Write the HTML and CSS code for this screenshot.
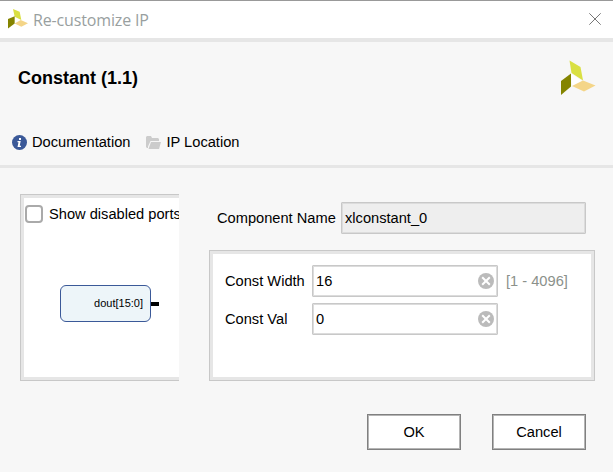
FILE: index.html
```html
<!DOCTYPE html>
<html lang="en">
<head>
<meta charset="utf-8">
<title>Re-customize IP</title>
<link rel="stylesheet" href="styles.css">
</head>
<body>
<div class="dialog">
  <header class="titlebar">
    <svg class="title-logo" viewBox="0 0 36 36" aria-hidden="true"><path fill="#d9e043" d="M9 0 21 5 24 20 12 14z"/><path fill="#848400" d="M0 18 12 13v13L0 35z"/><path fill="#f4d588" d="M12 26 23 20 36 25.500 24 32z"/></svg>
    <span class="title-text">Re-customize IP</span>
    <svg class="close" viewBox="0 0 12 12" aria-hidden="true"><path d="M.3.3 11.700 11.700M11.700.3.3 11.700" stroke="#777" stroke-width="1" fill="none"/></svg>
  </header>
  <section class="heading">
    <div class="heading-row">
      <h1>Constant (1.1)</h1>
      <svg class="logo" viewBox="0 0 36 36" aria-hidden="true"><path fill="#d9e043" d="M9.500.5 20.500 7 23 20.500 11.500 13z"/><path fill="#fff" d="M11 13.500 22 21 12 26z"/><path fill="#848400" d="M1 21 11 13.500v13L1 35z"/><path fill="#f4d588" d="M12 26 23 20.500 35.500 25.500 24 31.500z"/></svg>
    </div>
    <nav class="links">
      <a class="link doc"><svg width="15" height="15" viewBox="0 0 15 15" aria-hidden="true"><circle cx="7.500" cy="7.500" r="7.500" fill="#3b5998"/><path fill="#fff" d="M7 3h2v2H7zM5.500 6H8.700L7.700 10.700H9V12H5.500L6.500 7.200H5.500z"/></svg>Documentation</a>
      <a class="link"><svg width="15" height="13" viewBox="0 0 15 13" aria-hidden="true"><path fill="#ccc" d="M0 1 1 0H5L6 2H12L13 3V5H4.500L2 10.500V12H1L0 11z"/><path fill="#ccc" d="M5 6H15L13 13H2.500z"/></svg>IP Location</a>
    </nav>
  </section>
  <main class="content">
    <section class="preview">
      <label class="ports"><span class="check"></span>Show disabled ports</label>
      <div class="symbol"><div class="block">dout[15:0]</div><span class="pin"></span></div>
    </section>
    <section class="config">
      <div class="name-row"><span class="name-label">Component Name</span><div class="field readonly">xlconstant_0</div></div>
      <div class="params">
        <div class="param"><span class="label">Const Width</span><div class="field">16<svg class="clear" viewBox="0 0 16 16" aria-hidden="true"><circle cx="8" cy="8" r="8" fill="#bbb"/><path d="m4.200 4.200 7.600 7.600m0-7.600-7.600 7.600" stroke="#fff" stroke-width="2"/></svg></div><span class="range">[1 - 4096]</span></div>
        <div class="param"><span class="label">Const Val</span><div class="field">0<svg class="clear" viewBox="0 0 16 16" aria-hidden="true"><circle cx="8" cy="8" r="8" fill="#bbb"/><path d="m4.200 4.200 7.600 7.600m0-7.600-7.600 7.600" stroke="#fff" stroke-width="2"/></svg></div></div>
      </div>
    </section>
  </main>
  <footer class="actions"><div class="button">OK</div><div class="button">Cancel</div></footer>
</div>
</body>
</html>
```
FILE: styles.css
```css
* { box-sizing: border-box; }
body { margin: 0; font: 14.650px/18px "Liberation Sans", Arial, sans-serif; color: #000; background: #f7f7f7; }
svg { display: block; flex: none; }
.dialog { width: 613px; height: 472px; overflow: hidden; background: #f7f7f7; }
.titlebar { height: 42px; display: flex; align-items: center; padding: 0 12px 0 8px; background: #fff; border-top: 1px solid #999; border-bottom: 4px solid #e6e6e6; }
.title-logo { width: 20px; height: 20px; margin-bottom: 2px; }
.title-text { margin-left: 5px; flex: 1; font: 16px/22px "Open Sans", sans-serif; letter-spacing: -.15px; color: #999f9f; }
.close { width: 12px; height: 12px; margin-bottom: 1px; }
.heading { height: 126px; padding-top: 18px; border-bottom: 3px solid #e6e6e6; }
.heading-row { display: flex; justify-content: space-between; padding: 0 17px 0 18px; height: 72px; }
h1 { margin: 8px 0 0; font-size: 18px; line-height: 20px; }
.logo { width: 36px; height: 36px; }
.links { display: flex; gap: 16px; padding-left: 12px; }
.link { display: flex; align-items: center; gap: 5px; height: 20px; }
.content { display: flex; gap: 30px; padding: 26px 18px 0 20px; height: 213px; }
.preview { width: 159px; height: 187px; background: #fff; border: 1px solid #c8c8c8; border-right: 0; box-shadow: inset 3px 0 #e6e6e6, inset 0 3px #e6e6e6, inset 0 -3px #e6e6e6; overflow: hidden; padding: 10px 0 0 4px; }
.ports { display: flex; align-items: center; gap: 6px; height: 18px; white-space: nowrap; }
.check { width: 18px; height: 18px; flex: none; border: 2px solid #aaa; border-radius: 4px; }
.symbol { display: flex; align-items: center; margin: 62px 0 0 35px; }
.block { width: 91px; height: 37px; padding-right: 7px; border: 1px solid #3b5998; border-radius: 6px; background: #edf5f9; text-align: right; font-size: 11px; line-height: 35px; }
.pin { width: 8px; height: 4px; background: #000; }
.config { width: 386px; padding-top: 8px; }
.name-row { display: flex; align-items: center; padding-left: 8px; }
.name-label { width: 124px; }
.field { display: flex; align-items: center; justify-content: space-between; width: 186px; height: 32px; padding: 0 3px; border: 1px solid #c8c8c8; border-radius: 1px; background: #fff; box-shadow: inset 0 0 0 1px #dcdcdc; }
.readonly { width: 245px; background: #eee; }
.params { height: 131px; margin-top: 16px; padding: 11px 12px; border: 4px solid #e6e6e6; outline: 1px solid #c8c8c8; outline-offset: -1px; background: #fff; }
.param { display: flex; align-items: center; height: 32px; }
.param + .param { margin-top: 6px; }
.label { width: 87px; }
.clear { width: 16px; height: 16px; }
.range { margin-left: 8px; color: #8b918b; }
.actions { display: flex; justify-content: flex-end; gap: 31px; padding: 33px 27px 0 0; }
.button { display: flex; align-items: center; justify-content: center; width: 94px; height: 36px; background: #fff; border: 1px solid #808080; box-shadow: inset 0 0 0 1px #b5b5b5; }
```
